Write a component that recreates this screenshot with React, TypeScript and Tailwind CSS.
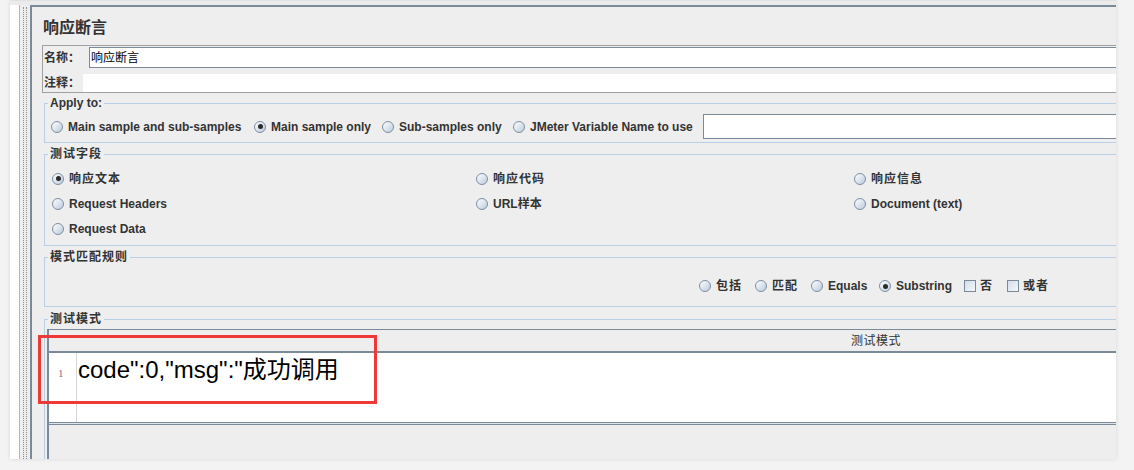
import React from 'react'

const FONT = "font-['Liberation_Sans','Noto_Sans_CJK_SC',sans-serif]"

function Radio({ checked = false }: { checked?: boolean }) {
  return (
    <span className="w-[12px] h-[12px] shrink-0 rounded-full border border-[#7d8ea3] bg-linear-to-br from-white to-[#bccbdc] flex items-center justify-center">
      {checked && <span className="w-[5px] h-[5px] rounded-full bg-[#2b2b2b]" />}
    </span>
  )
}

function Check() {
  return <span className="w-[12px] h-[12px] shrink-0 border border-[#7a8a99] bg-linear-to-br from-[#d3deea] to-[#f4f7fa]" />
}

function Opt({
  label,
  checked,
  cjk,
  box,
  className,
}: {
  label: string
  checked?: boolean
  cjk?: boolean
  box?: boolean
  className?: string
}) {
  return (
    <label className={`flex items-center whitespace-nowrap shrink-0 ${box ? 'gap-[4px]' : 'gap-[5px]'} ${className ?? ''}`}>
      {box ? <Check /> : <Radio checked={checked} />}
      <span className={`text-[12px] font-bold leading-none text-[#333] ${cjk ? 'tracking-[1px]' : ''}`}>{label}</span>
    </label>
  )
}

function Group({ legend, cjk, className, children }: { legend: string; cjk?: boolean; className?: string; children: React.ReactNode }) {
  return (
    <div className={`relative ml-[12px] border border-[#b8cfe5] ${className ?? ''}`}>
      <span
        className={`absolute left-[3px] -top-[8px] px-[2px] bg-[#eeeeee] text-[12px] font-bold leading-[14px] text-[#333] ${cjk ? 'tracking-[1px]' : ''}`}
      >
        {legend}
      </span>
      {children}
    </div>
  )
}

export default function App() {
  return (
    <div className={`relative w-[1134px] h-[470px] bg-[#f3f3f3] overflow-hidden ${FONT}`}>
      {/* window */}
      <div className="ml-[10px] w-[1106px] h-[459px] flex flex-col overflow-hidden bg-[#eeeeee] shadow-[0_0_4px_rgba(0,0,0,0.12)]">
        <div className="h-[5px] bg-[#ebebeb] border-t border-[#e2e2e2]" />
        <div className="flex-1 flex min-h-0">
          <div className="w-[9px] bg-white" />
          <div className="w-[1px] bg-[#b4b4b4]" />
          <div className="w-[10px] bg-[#eeeeee] flex justify-center pt-[2px]">
            <div className="w-[4px] border-x border-dotted border-[#8c8c8c]" />
          </div>

          {/* main panel */}
          <div className="flex-1 min-w-0 border-l-2 border-t-2 border-[#7a8a99] bg-[#eeeeee] overflow-hidden">
            <div className="w-[1100px] flex flex-col h-full">
              {/* title */}
              <div className="h-[38px] pt-[11px] pl-[11px] text-[16px] font-bold leading-[20px] text-[#333]">响应断言</div>

              {/* name / comment */}
              <div className="ml-[10px] border border-[#a0a0a0] pl-[1px]">
                <div className="h-[23px] flex items-center">
                  <span className="w-[45px] text-[12px] font-bold text-[#333] leading-none">名称：</span>
                  <div className="flex-1 h-[21px] bg-white border border-r-0 border-[#7a8a99] flex items-center pl-[1px] text-[12px] text-black leading-none">
                    响应断言
                  </div>
                </div>
                <div className="mt-[5px] h-[18px] flex items-center">
                  <span className="w-[39px] text-[12px] font-bold text-[#333] leading-none">注释：</span>
                  <div className="flex-1 h-[18px] bg-white" />
                </div>
              </div>

              {/* apply to */}
              <Group legend="Apply to:" className="mt-[10px] pt-[10px] pb-[3px] pl-[6px]">
                <div className="flex items-center h-[25px]">
                  <Opt label="Main sample and sub-samples" className="w-[203px]" />
                  <Opt label="Main sample only" checked className="w-[128px]" />
                  <Opt label="Sub-samples only" className="w-[131px]" />
                  <Opt label="JMeter Variable Name to use" className="w-[190px]" />
                  <div className="flex-1 h-[25px] bg-white border border-r-0 border-[#7a8a99]" />
                </div>
              </Group>

              {/* fields to test */}
              <Group legend="测试字段" cjk className="mt-[11px] pt-[11px] pb-[4px] pl-[7px]">
                <div className="grid grid-cols-[424px_378px_1fr] auto-rows-[25px] items-center">
                  <Opt label="响应文本" cjk checked />
                  <Opt label="响应代码" cjk />
                  <Opt label="响应信息" cjk />
                  <Opt label="Request Headers" />
                  <Opt label="URL样本" />
                  <Opt label="Document (text)" />
                  <Opt label="Request Data" />
                </div>
              </Group>

              {/* pattern matching rules */}
              <Group legend="模式匹配规则" cjk className="mt-[11px] pt-[16px] pb-[8px] pl-[654px]">
                <div className="h-[24px] flex items-center">
                  <Opt label="包括" cjk className="w-[56px]" />
                  <Opt label="匹配" cjk className="w-[56px]" />
                  <Opt label="Equals" className="w-[68px]" />
                  <Opt label="Substring" checked className="w-[85px]" />
                  <Opt label="否" cjk box className="w-[43px]" />
                  <Opt label="或者" cjk box />
                </div>
              </Group>

              {/* patterns to test */}
              <Group legend="测试模式" cjk className="mt-[12px] flex-1 border-b-0 pt-[9px] pl-[2px]">
                <div className="h-full border-l-2 border-t border-[#7a8a99] flex flex-col">
                  <div className="h-[23px] border-b-2 border-[#7a8a99] flex items-center pl-[802px] text-[12px] leading-none text-[#333] tracking-[0.5px]">
                    测试模式
                  </div>
                  <div className="h-[69px] bg-white flex">
                    <div className="w-[28px] border-r border-[#d6d6d6] pt-[15px] pl-[9px] text-[11px] leading-none text-[#8a6d8a] font-['Liberation_Serif',serif]">
                      1
                    </div>
                    <div className="pl-[1px] pt-[3px] text-[24px] leading-[28px] text-black whitespace-nowrap">
                      code":0,"msg":"成功调用
                    </div>
                  </div>
                  <div className="h-[3px] border-y border-[#7a8a99] bg-[#dfe4e9]" />
                  <div className="flex-1 bg-[#eeeeee]" />
                </div>
              </Group>
            </div>
          </div>
        </div>
      </div>

      {/* annotation */}
      <div className="absolute left-[38px] top-[335px] w-[339px] h-[69px] border-[3px] border-[#ef3838]" />
    </div>
  )
}
